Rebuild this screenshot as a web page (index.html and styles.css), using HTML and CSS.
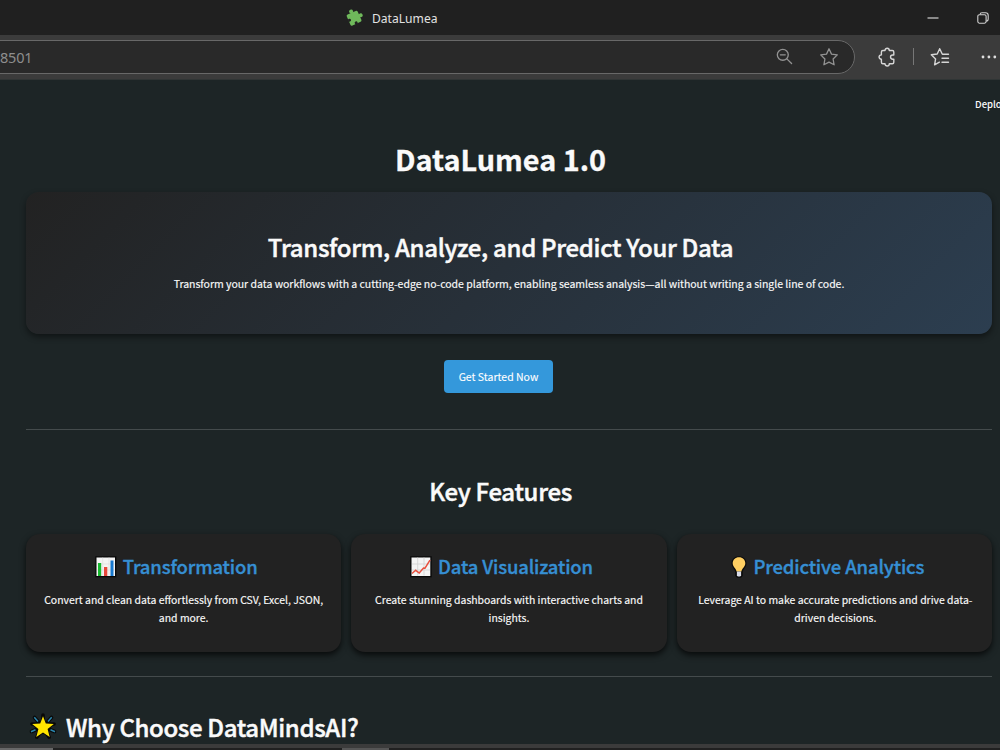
FILE: index.html
```html
<!DOCTYPE html>
<html lang="en">
<head>
<meta charset="utf-8">
<title>DataLumea</title>
<link rel="stylesheet" href="styles.css">
</head>
<body>
<div class="window">
  <header class="titlebar">
    <div class="tab">
      <svg class="tab-icon" viewBox="0 0 18 18"><g transform="rotate(-24 9 9)"><rect x="3" y="3.200" width="12" height="12" rx="1.600" fill="#6fb95b"/><g fill="#6fb95b"><circle cx="9" cy="1.900" r="2"/><circle cx="16.200" cy="9.200" r="2"/></g><g fill="#202020"><circle cx="4" cy="9.200" r="1.500"/><circle cx="9" cy="14.400" r="1.500"/></g></g></svg>
      <span>DataLumea</span>
    </div>
    <div class="controls">
      <svg class="min" viewBox="0 0 12 12"><path d="M.5 6h11" stroke="#d0d0d0" stroke-width="1.200"/></svg>
      <svg class="max" viewBox="0 0 12 12" fill="none" stroke="#d0d0d0" stroke-width="1.100"><rect x=".8" y="2.700" width="8.300" height="8.500" rx="1.600"/><path d="M3.100 2.500C3.100 1.300 4 .8 5 .8h3.500c1.700 0 2.700 1 2.700 2.700v3.600c0 1.200-.8 2-2 2"/></svg>
    </div>
  </header>
  <div class="toolbar">
    <div class="address">
      <span class="url">8501</span>
      <svg class="zoom-icon" viewBox="0 0 18 18" fill="none" stroke="#929292" stroke-width="1.400" stroke-linecap="round"><circle cx="7.200" cy="7.200" r="5.800"/><path d="M11.500 11.500l5 5M4.600 7.200h5.200"/></svg>
      <svg class="star-icon" viewBox="0 0 20 20" fill="none" stroke="#929292" stroke-width="1.300" stroke-linejoin="round"><path d="M10 1.800l2.500 5.300 5.800.8-4.200 4.100 1 5.800-5.100-2.700-5.100 2.700 1-5.800-4.200-4.100 5.800-.8z"/></svg>
    </div>
    <svg class="ext-icon" viewBox="0 0 18 20" fill="none" stroke="#d6d6d6" stroke-width="1.400" stroke-linejoin="round"><path d="M4.900 3.500H7c0-3 4.300-3 4.300 0h3c1 0 1.500.5 1.500 1.500V8h-1.100c-2.900 0-2.900 4.200 0 4.200h1.100v3c0 1-.5 1.500-1.500 1.500h-3c0 3-4.300 3-4.300 0H4.900c-1 0-1.500-.5-1.500-1.500v-3c-3.100 0-3.100-4.300 0-4.300V5c0-1 .5-1.500 1.500-1.500z"/></svg>
    <span class="divider"></span>
    <svg class="fav-icon" viewBox="0 0 20 20" fill="none" stroke="#d6d6d6" stroke-width="1.400" stroke-linejoin="round" stroke-linecap="round"><path d="M14.200 7.300l-2-.3L9.700 1.700 7.200 7l-5.900.8 4.300 4.100-1 5.900 4.800-2.600M12.500 7.300h6M12 11.300h6.500M12 15.300h6.500"/></svg>
    <svg class="more-icon" viewBox="0 0 16 4" fill="#dedede"><circle cx="2" cy="2" r="1.400"/><circle cx="7.900" cy="2" r="1.400"/><circle cx="13.800" cy="2" r="1.400"/></svg>
  </div>
  <main class="page">
    <div class="deploy">Deploy</div>
    <h1>DataLumea 1.0</h1>
    <section class="hero">
      <h2>Transform, Analyze, and Predict Your Data</h2>
      <p>Transform your data workflows with a cutting-edge no-code platform, enabling seamless analysis—all without writing a single line of code.</p>
    </section>
    <button class="cta">Get Started Now</button>
    <hr>
    <h2 class="features-title">Key Features</h2>
    <section class="cards">
      <article class="card">
        <h3><svg class="emoji" viewBox="0 0 22 22"><rect x=".3" y=".3" width="21" height="21" fill="#080808"/><rect x="1.500" y="1.500" width="18.500" height="18.500" fill="#f4f4f4"/><path d="M7.700 1.500v18M14 1.500v18M2 8h18M2 14h18" stroke="#dcdcdc" stroke-width=".6"/><path d="M3 7h3.200v13H3z" fill="#16b82e"/><path d="M9 11h3.300v9H9z" fill="#e8473b"/><path d="M15.500 4.500h3v15.500h-3z" fill="#1678cf"/></svg><span>Transformation</span></h3>
        <p>Convert and clean data effortlessly from CSV, Excel, JSON,<br>and more.</p>
      </article>
      <article class="card">
        <h3><svg class="emoji" viewBox="0 0 22 22"><rect x=".3" y=".3" width="21.400" height="21" fill="#080808"/><rect x="1.500" y="1.500" width="18.800" height="18.500" fill="#f4f4f4"/><path d="M7.700 1.500v18M14 1.500v18M2 8h18M2 14h18" stroke="#d2d2d2" stroke-width=".8"/><path d="M2 17.500l3.700-3.200 3.500 2.700 4.300-5 1.500.2 5-8" fill="none" stroke="#e8503f" stroke-width="1.500"/></svg><span>Data Visualization</span></h3>
        <p>Create stunning dashboards with interactive charts and<br>insights.</p>
      </article>
      <article class="card predictive">
        <h3><svg class="emoji bulb" viewBox="0 0 16 22"><path d="M8 .2C3.600.2.500 3.300.500 7.300c0 3.600 2.800 5.300 3.700 8.200v4.500L6 21.800h4l1.800-1.800v-4.500c.9-2.900 3.700-4.600 3.700-8.200C15.500 3.300 12.400.2 8 .2z" fill="#0b0b0b"/><path d="M8 1.300c-3.700 0-6.300 2.600-6.300 6 0 3.500 3.200 5 3.900 8.200h4.800c.7-3.200 3.900-4.700 3.900-8.200 0-3.400-2.600-6-6.300-6z" fill="#ffcf62"/><path d="M5.900 15.500h4.200v4l-1 1H6.900l-1-1z" fill="#d9dce8"/></svg><span>Predictive Analytics</span></h3>
        <p>Leverage AI to make accurate predictions and drive data-<br>driven decisions.</p>
      </article>
    </section>
    <hr class="second">
    <h2 class="why"><svg class="glow" viewBox="0 0 28 28"><g stroke="#080808" stroke-width="3.600" stroke-linecap="round"><path d="M5.500 4.500l4 4.500M22.500 4.500l-4 4.500M2.500 18.500l5-2M25.500 18.500l-5-2M14 2v4M3 11h5M25 11h-5M8 24l2-3M20 24l-2-3"/></g><path d="M14 3.300l2.800 7.200 8 .5-6.200 5.100 2.100 7.800-6.700-4.300-6.700 4.300 2.100-7.800-6.200-5.100 8-.5z" fill="#ffe500" stroke="#080808" stroke-width="1.600" paint-order="stroke"/><path d="M5.300 4.300l3.700 4.200M22.700 4.300L19 8.500M2 18.700l4.500-2M26 18.700l-4.500-2" stroke="#2b86ad" stroke-width="1.500"/></svg><span>Why Choose DataMindsAI?</span></h2>
  </main>
  <footer class="taskbar"><span class="search"></span><span class="active"></span></footer>
</div>
</body>
</html>
```
FILE: styles.css
```css
* { box-sizing: border-box; }
body { margin: 0; background: #1d2526; overflow: hidden; }
svg { display: block; flex: none; }
h1, h2, h3, p { margin: 0; white-space: nowrap; }
.window { width: 1000px; height: 750px; overflow: hidden; display: flex; flex-direction: column; color: #fafafa; font-family: "Noto Sans CJK SC", "Noto Sans", sans-serif; }
.titlebar { height: 35px; flex: none; background: #202020; display: flex; justify-content: space-between; padding: 0 11px 0 345px; }
.tab { display: flex; align-items: center; gap: 9px; font: 12.100px/35px "Noto Sans", sans-serif; color: #e2e2e2; }
.tab span { padding-top: 2px; }
.tab-icon { width: 18px; height: 18px; }
.controls { display: flex; align-items: center; gap: 38px; }
.min, .max { width: 12px; height: 12px; }
.toolbar { height: 45px; flex: none; background: #3b3b3b; display: flex; align-items: center; padding-bottom: 1px; border-bottom: 1px solid #303535; }
.address { width: 856px; height: 34px; margin-left: -1px; background: #292929; border: 1px solid #686868; border-radius: 0 18px 18px 0; display: flex; align-items: center; }
.url { flex: 1; font: 14.500px/32px "Noto Sans", sans-serif; color: #8e8e8e; letter-spacing: -.2px; }
.zoom-icon { width: 17px; height: 17px; margin-right: 26px; }
.star-icon { width: 20px; height: 20px; margin-right: 15px; }
.ext-icon { width: 18px; height: 20px; margin-left: 23px; }
.divider { width: 1px; height: 17px; margin-left: 17px; background: #777; }
.fav-icon { width: 20px; height: 20px; margin-left: 16px; }
.more-icon { width: 16px; height: 4px; margin-left: 31px; }
.page { height: 664px; flex: none; overflow: hidden; padding: 0 8px 0 26px; background: #1d2526; }
.deploy { height: 46px; margin-left: 949px; font-size: 9.500px; line-height: 48px; font-weight: 500; white-space: nowrap; }
h1 { height: 66px; line-height: 66px; font-size: 28.800px; font-weight: 700; text-align: center; padding-right: 17px; -webkit-text-stroke: .3px; }
.hero { height: 142px; border-radius: 13px; background: linear-gradient(135deg, #222 0%, #2c3e50 100%); box-shadow: 0 3px 6px #0007; text-align: center; padding: 35px 0 0; }
h2 { font-size: 24px; font-weight: 500; line-height: 40px; letter-spacing: -.32px; -webkit-text-stroke: .45px; }
.hero h2 { padding-right: 17px; }
.hero p { font-size: 10.500px; line-height: 18px; margin-top: 8px; letter-spacing: -.022px; -webkit-text-stroke: .15px; }
.cta { display: block; width: 109px; height: 33px; margin: 26px auto 0 418px; padding: 0; border: 0; border-radius: 4px; background: #3498db; color: #fff; font: 10.500px/34px "Noto Sans CJK SC", sans-serif; -webkit-text-stroke: .1px; }
hr { height: 1px; border: 0; background: #444b4c; margin: 36px 0 0; }
.features-title { height: 104px; line-height: 122px; text-align: center; padding-right: 17px; }
.cards { display: grid; grid-template-columns: repeat(3, 1fr); gap: 10px; }
.card { height: 118px; border-radius: 14px; background: #222; box-shadow: 0 3px 6px #000b; text-align: center; padding-top: 18px; }
.card h3 { display: flex; justify-content: center; align-items: center; gap: 6px; height: 30px; padding-right: 15px; color: #368fd3; font-size: 18.500px; line-height: 29px; font-weight: 500; letter-spacing: -.15px; -webkit-text-stroke: .35px; }
.card h3 span { position: relative; top: -1px; }
.predictive { padding-left: 2px; }
.emoji { width: 22px; height: 22px; }
.bulb { width: 16px; }
.card p { font-size: 10.450px; line-height: 17.500px; margin-top: 9px; -webkit-text-stroke: .15px; }
hr.second { margin-top: 24px; }
.why { display: flex; align-items: center; gap: 9px; margin: 30px 0 0 3px; letter-spacing: -.36px; }
.glow { width: 28px; height: 28px; }
.taskbar { height: 6px; flex: none; background: linear-gradient(#3b3b3b 0 4px, #202020 4px); display: flex; align-items: flex-end; }
.search { width: 53px; height: 2px; background: #686868; }
.active { width: 47px; height: 2px; margin-left: 289px; background: #555; }
```
